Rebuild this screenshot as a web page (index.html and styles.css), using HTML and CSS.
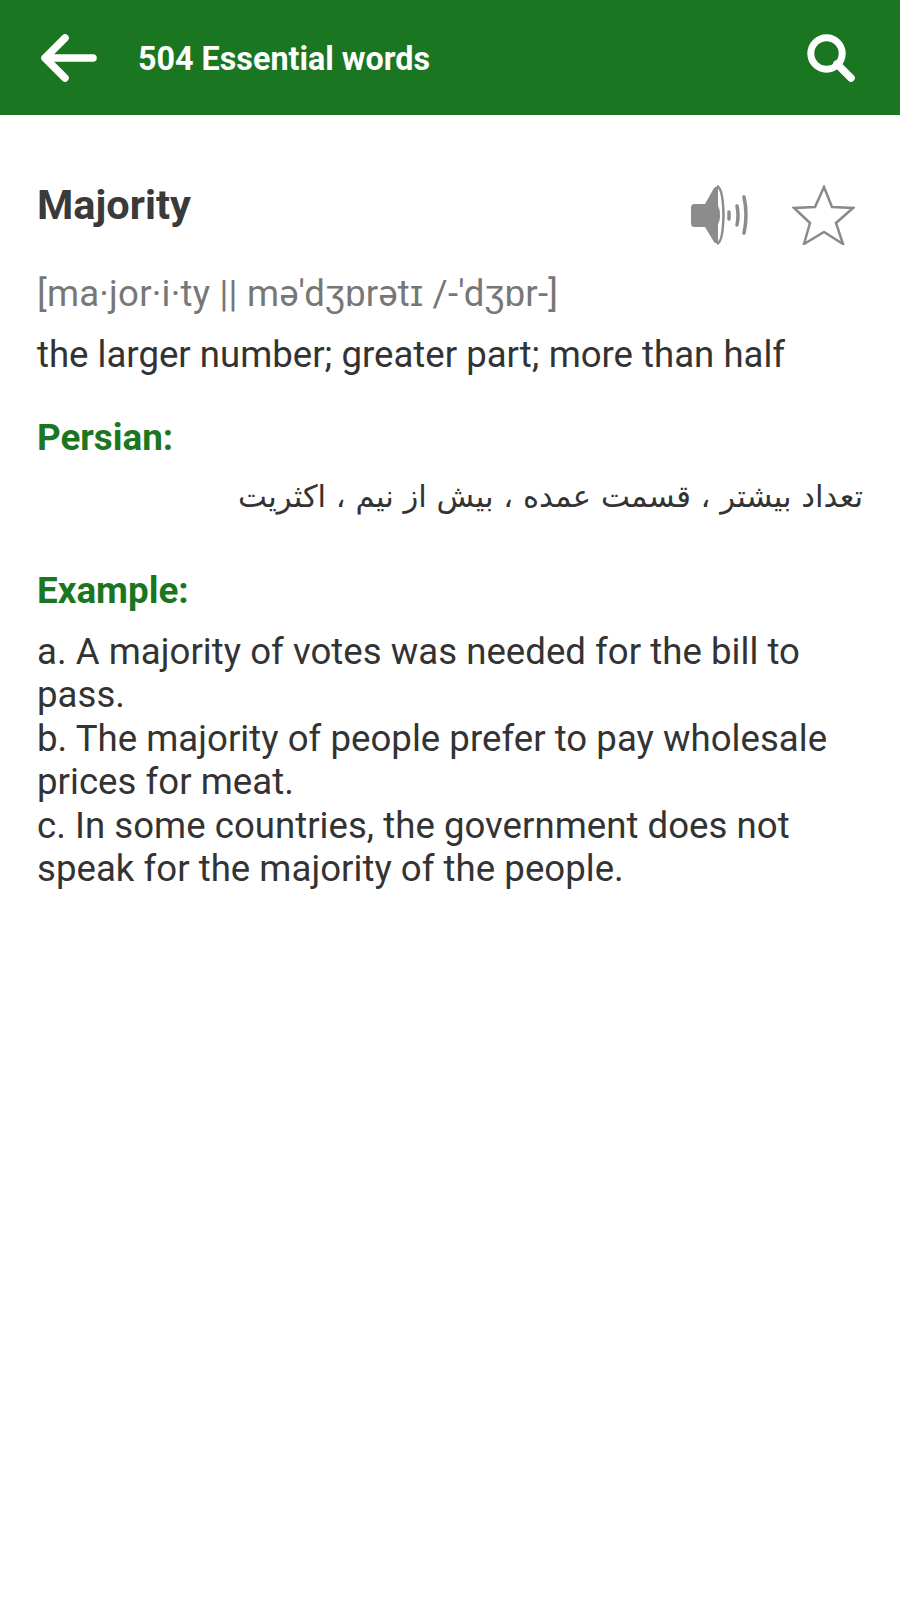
FILE: index.html
```html
<!DOCTYPE html>
<html lang="en">
<head>
    <meta charset="UTF-8">
    <meta name="viewport" content="width=device-width, initial-scale=1.0">
    <title>504 Essential words</title>
    <link rel="stylesheet" href="styles.css">
</head>
<body>

<header class="toolbar">
    <svg class="back-icon" width="56" height="48" viewBox="0 0 56 48">
        <path d="M24 4 L4 24 L24 44 M4 24 H52" fill="none" stroke="#fff" stroke-width="7.5" stroke-linecap="round" stroke-linejoin="round"/>
    </svg>
    <h1 class="toolbar-title">504 Essential words</h1>
    <svg class="search-icon" width="48" height="48" viewBox="0 0 48 48">
        <circle cx="19.5" cy="19.5" r="15.7" fill="none" stroke="#fff" stroke-width="7"/>
        <path d="M30 30 L44 44" fill="none" stroke="#fff" stroke-width="7.5" stroke-linecap="round"/>
    </svg>
</header>

<main class="content">
    <div class="word-row">
        <h2 class="word">Majority</h2>
        <div class="word-actions">
            <svg class="sound-icon" width="58" height="60" viewBox="0 0 58 60">
                <path d="M3 19 Q0 19 0 23 V38 Q0 42 3 42 H14 L23 57 Q25 59 27 58 V39 Q29 36 29 30 Q29 24 27 21 V2 Q25 1 23 3 L14 19 Z" fill="#8c8c8c"/>
                <path d="M26 1 Q32 3 32.5 30 Q32 57 26 59" fill="none" stroke="#8c8c8c" stroke-width="2.5"/>
                <path d="M38 27 V34 M46 21 Q48 30 46 40 M53 12 Q57 30 53 48" fill="none" stroke="#8c8c8c" stroke-width="3.5" stroke-linecap="round"/>
            </svg>
            <svg class="star-icon" width="63" height="60" viewBox="0 0 63 60">
                <path d="M32 2 L40 22 L61 23 L44 38 L51 59 L32 47 L12 59 L18 38 L2 23 L23 22 Z" fill="none" stroke="#8a8a8a" stroke-width="2.5"/>
            </svg>
        </div>
    </div>

    <p class="phonetic">[ma·jor·i·ty || mə'dʒɒrətɪ /-'dʒɒr-]</p>
    <p class="definition">the larger number; greater part; more than half</p>

    <h3 class="section-label persian-label">Persian:</h3>
    <p class="persian" dir="rtl" lang="fa">تعداد بیشتر ، قسمت عمده ، بیش از نیم ، اکثریت</p>

    <h3 class="section-label example-label">Example:</h3>
    <p class="examples">
        a. A majority of votes was needed for the bill to pass.<br>
        b. The majority of people prefer to pay wholesale prices for meat.<br>
        c. In some countries, the government does not speak for the majority of the people.
    </p>
</main>

</body>
</html>
```

FILE: styles.css
```css
* {
    box-sizing: border-box;
}
body {
    margin: 0;
    font-family: Roboto, sans-serif;
    background-color: white;
    color: #333;
}
h1, h2, h3, p {
    margin: 0;
}
.toolbar {
    display: flex;
    align-items: center;
    height: 115px;
    padding: 0 45px 0 41px;
    background: #1a7620;
}
.back-icon {
    flex: none;
    margin-right: 41px;
}
.toolbar-title {
    flex: 1;
    padding-top: 2px;
    font-size: 32.3px;
    font-weight: 700;
    color: white;
}
.search-icon {
    flex: none;
}
.content {
    padding: 64px 37px 0;
}
.word-row {
    display: flex;
    justify-content: space-between;
    align-items: flex-start;
    height: 72px;
}
.word {
    font-size: 41.5px;
    font-weight: 700;
    line-height: 52px;
    color: #3a3a3a;
}
.word-actions {
    display: flex;
    align-items: center;
    gap: 43px;
    margin: 6px 8px 0 0;
}
.phonetic {
    margin-top: 20px;
    font-size: 36.6px;
    letter-spacing: 0.22px;
    line-height: 46px;
    color: #777;
}
.definition {
    margin-top: 15px;
    font-size: 36.6px;
    line-height: 46px;
}
.section-label {
    font-size: 36.8px;
    font-weight: 700;
    line-height: 44px;
    color: #1a7620;
}
.persian-label {
    margin-top: 38px;
}
.persian {
    margin-top: 15px;
    font-family: "DejaVu Sans", sans-serif;
    font-size: 30.7px;
    line-height: 44px;
    text-align: right;
}
.example-label {
    margin-top: 50px;
}
.examples {
    margin-top: 17px;
    font-size: 36.6px;
    letter-spacing: 0.03px;
    line-height: 43.4px;
}
```
